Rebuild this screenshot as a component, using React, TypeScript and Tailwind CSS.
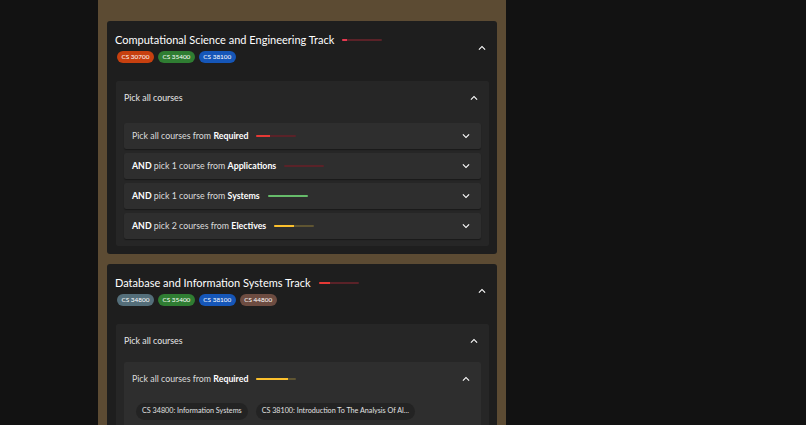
import React from "react";

const font = { fontFamily: "Lato, 'Noto Sans', sans-serif" };

function ChevronUp({ className = "" }: { className?: string }) {
  return (
    <svg viewBox="0 0 24 24" className={"w-[14px] h-[14px] fill-white " + className}>
      <path d="m12 8-6 6 1.41 1.41L12 10.83l4.59 4.58L18 14z" />
    </svg>
  );
}

function ChevronDown({ className = "" }: { className?: string }) {
  return (
    <svg viewBox="0 0 24 24" className={"w-[14px] h-[14px] fill-white " + className}>
      <path d="M16.59 8.59 12 13.17 7.41 8.59 6 10l6 6 6-6z" />
    </svg>
  );
}

type Bar = { pct: number; fill: string; track: string };

function Progress({ bar }: { bar: Bar }) {
  return (
    <div className="w-[40px] h-[2px] rounded-full overflow-hidden" style={{ background: bar.track }}>
      <div className="h-full" style={{ width: `${bar.pct}%`, background: bar.fill }} />
    </div>
  );
}

function Chip({ label, color }: { label: string; color: string }) {
  return (
    <span
      className="inline-flex items-center h-[12px] px-[4.5px] rounded-full text-[6.4px] text-white leading-none"
      style={{ background: color }}
    >
      {label}
    </span>
  );
}

function Row({ prefix, mid, name, bar }: { prefix?: string; mid: string; name: string; bar: Bar }) {
  return (
    <div className="h-[26px] bg-[#2e2e2e] rounded-[2px] flex items-center pl-[8px] pr-[8px] shadow-[0_1px_1px_rgba(0,0,0,0.35)]">
      <div className="flex-1 flex items-center gap-[8px] text-[8.8px] text-[#dcdcdc]">
        <span>
          {prefix && <b className="font-bold text-white">{prefix} </b>}
          {mid} <b className="font-bold text-white">{name}</b>
        </span>
        <Progress bar={bar} />
      </div>
      <ChevronDown />
    </div>
  );
}

const RED_TRACK = "#5a2228";

export default function App() {
  return (
    <div className="w-full h-[425px] bg-[#121212] overflow-hidden flex flex-col" style={font}>
      <div className="h-[3px] bg-[#3a3a3a]" />
      <div className="flex flex-1">
        <div className="w-[98px]" />
        <div className="w-[408px] bg-[#5c4b33] px-[9px] pt-[21px] flex flex-col gap-[10px]">
          {/* Track 1 */}
          <section className="bg-[#1e1e1e] rounded-[3px] pl-[9px] pr-[8px] pb-[8px]">
            <header className="flex items-center pt-[12px] pb-[18px]">
              <div className="flex-1 -ml-[1px]">
                <div className="flex items-center gap-[8px] h-[14px]">
                  <span className="text-[11px] text-white">Computational Science and Engineering Track</span>
                  <Progress bar={{ pct: 12, fill: "#e53950", track: RED_TRACK }} />
                </div>
                <div className="flex gap-[4px] mt-[4px] ml-[2px]">
                  <Chip label="CS 30700" color="#c7400f" />
                  <Chip label="CS 35400" color="#2f7d32" />
                  <Chip label="CS 38100" color="#1556b8" />
                </div>
              </div>
              <ChevronUp />
            </header>
            <div className="bg-[#262626] rounded-[2px] px-[8px] pb-[7px]">
              <div className="h-[33px] flex items-center">
                <span className="flex-1 text-[8.8px] text-[#e6e6e6]">Pick all courses</span>
                <ChevronUp />
              </div>
              <div className="mt-[9px] flex flex-col gap-[4px]">
                <Row mid="Pick all courses from" name="Required" bar={{ pct: 35, fill: "#e53935", track: RED_TRACK }} />
                <Row prefix="AND" mid="pick 1 course from" name="Applications" bar={{ pct: 0, fill: "#e53935", track: RED_TRACK }} />
                <Row prefix="AND" mid="pick 1 course from" name="Systems" bar={{ pct: 100, fill: "#66bb6a", track: "#2e4a2f" }} />
                <Row prefix="AND" mid="pick 2 courses from" name="Electives" bar={{ pct: 50, fill: "#fbc02d", track: "#5f5532" }} />
              </div>
            </div>
          </section>

          {/* Track 2 */}
          <section className="bg-[#1e1e1e] rounded-[3px] pl-[9px] pr-[8px] pb-[8px]">
            <header className="flex items-center pt-[12px] pb-[18px]">
              <div className="flex-1 -ml-[1px]">
                <div className="flex items-center gap-[8px] h-[14px]">
                  <span className="text-[11px] text-white">Database and Information Systems Track</span>
                  <Progress bar={{ pct: 28, fill: "#e53935", track: RED_TRACK }} />
                </div>
                <div className="flex gap-[4px] mt-[4px] ml-[2px]">
                  <Chip label="CS 34800" color="#546e7a" />
                  <Chip label="CS 35400" color="#2f7d32" />
                  <Chip label="CS 38100" color="#1556b8" />
                  <Chip label="CS 44800" color="#6d4c41" />
                </div>
              </div>
              <ChevronUp />
            </header>
            <div className="bg-[#262626] rounded-[2px] px-[8px] pb-[7px]">
              <div className="h-[33px] flex items-center">
                <span className="flex-1 text-[8.8px] text-[#e6e6e6]">Pick all courses</span>
                <ChevronUp />
              </div>
              <div className="mt-[5px] bg-[#2e2e2e] rounded-[2px] pl-[8px] pr-[8px] pb-[10px]">
                <div className="h-[34px] flex items-center">
                  <div className="flex-1 flex items-center gap-[8px] text-[8.8px] text-[#dcdcdc]">
                    <span>
                      Pick all courses from <b className="font-bold text-white">Required</b>
                    </span>
                    <Progress bar={{ pct: 78, fill: "#fbc02d", track: "#5f5532" }} />
                  </div>
                  <ChevronUp />
                </div>
                <div className="flex gap-[8px] mt-[7px] ml-[4px]">
                  <span className="h-[17px] px-[6px] rounded-full bg-[#232323] flex items-center text-[7.2px] text-[#e0e0e0]">
                    CS 34800: Information Systems
                  </span>
                  <span className="h-[17px] px-[6px] rounded-full bg-[#232323] flex items-center text-[7.2px] text-[#e0e0e0]">
                    CS 38100: Introduction To The Analysis Of Al...
                  </span>
                </div>
              </div>
            </div>
          </section>
        </div>
      </div>
    </div>
  );
}
